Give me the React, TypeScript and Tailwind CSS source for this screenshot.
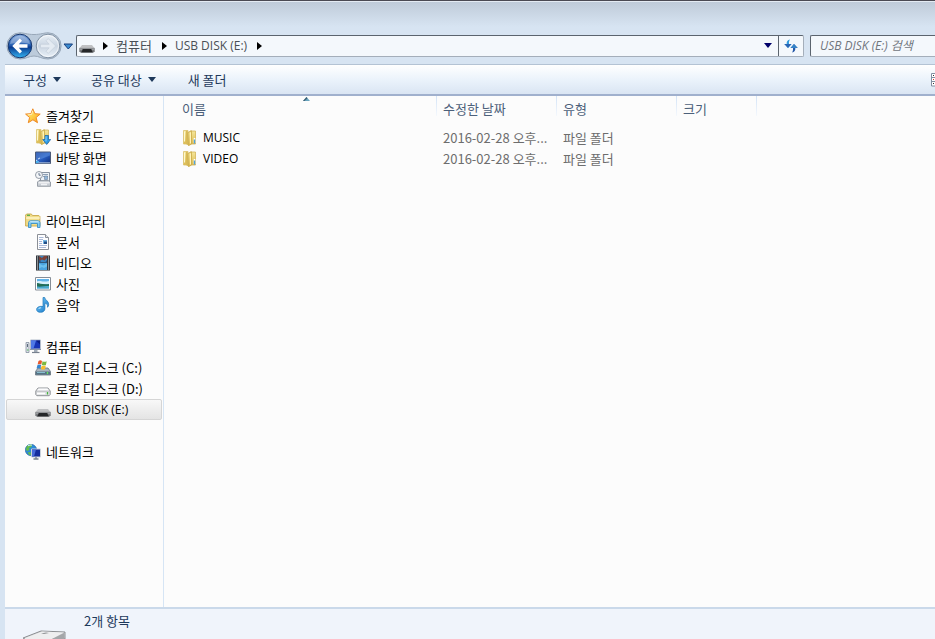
import React from 'react';

type IconProps = { className?: string };

function Star() {
  return (
    <svg width="16" height="16" viewBox="0 0 16 16">
      <defs>
        <linearGradient id="star" x1="0" y1="0" x2="1" y2="1">
          <stop offset="0" stopColor="#ffe9a0" />
          <stop offset="0.5" stopColor="#ffd04a" />
          <stop offset="1" stopColor="#f79a1e" />
        </linearGradient>
      </defs>
      <path d="M7.8.8l2 4.9 5.4.4-4.1 3.4 1.4 5.2-4.6-2.9-4.6 2.9 1.3-5.2L.6 6.1l5.3-.4z" fill="url(#star)" stroke="#ee8a24" strokeWidth="1" strokeLinejoin="round" />
      <path d="M7.8 2.6L6.6 6.4l-3.8.4" fill="none" stroke="#fff6cf" strokeWidth=".8" />
    </svg>
  );
}

function FolderShape() {
  return (
    <>
      <defs>
        <linearGradient id="leaf" x1="0" y1="0" x2="0" y2="1">
          <stop offset="0" stopColor="#f5e69a" />
          <stop offset="1" stopColor="#dcbb50" />
        </linearGradient>
      </defs>
      <path d="M1.500.5H6v13.500H1.500z" fill="url(#leaf)" stroke="#dbc26c" strokeWidth=".8" />
      <path d="M8 1h5.500v13H8z" fill="url(#leaf)" stroke="#d3b55b" strokeWidth=".8" />
      <path d="M4 .8h1.700l.8 14.700L4 14z" fill="#d9bb58" />
      <path d="M6 2.500L9.500.8v13.200L6.500 15.700z" fill="url(#leaf)" stroke="#c9a948" strokeWidth=".8" />
      <path d="M8.500 2.500v11" stroke="#fff3ba" />
      <path d="M2.500 1.500v10" stroke="#fdf8d0" />
    </>
  );
}

function Folder() {
  return (
    <svg width="16" height="16" viewBox="0 0 16 16">
      <FolderShape />
      <path d="M12.500 8v5" stroke="#fff" strokeWidth="1.600" />
      <path d="M12.500 9.500v4" stroke="#4da3dd" strokeWidth="1.300" />
    </svg>
  );
}

function Downloads() {
  return (
    <svg width="16" height="16" viewBox="0 0 16 16">
      <FolderShape />
      <path d="M10 6.500h3.500v4H15.700l-4 5-4-5H10z" fill="#2f9be6" stroke="#1663a8" strokeWidth=".7" strokeLinejoin="round" />
      <path d="M11 7.300v5" stroke="#9bdcff" strokeWidth=".9" />
    </svg>
  );
}

function Desktop() {
  return (
    <svg width="16" height="16" viewBox="0 0 16 16">
      <defs>
        <linearGradient id="desk" x1="0" y1="0" x2="1" y2="1">
          <stop offset="0" stopColor="#173c97" />
          <stop offset=".5" stopColor="#2960c4" />
          <stop offset="1" stopColor="#0e2d7c" />
        </linearGradient>
      </defs>
      <path d="M.5 2h15v11.500H.5z" fill="url(#desk)" stroke="#4a5a78" />
      <path d="M1 2.500h14v3L1 11z" fill="#7fb0ee" opacity=".35" />
      <path d="M1 12.800h14" stroke="#a8bedc" />
      <path d="M1 9.500l3 2.500H1z" fill="#bfe4ff" />
      <path d="M1 11h2.500v2H1z" fill="#49b1ef" />
      <path d="M3 9l2-1" stroke="#eef8ff" strokeWidth=".8" />
    </svg>
  );
}

function Recent() {
  return (
    <svg width="16" height="16" viewBox="0 0 16 16">
      <path d="M5.500 1.500h9v10h-9z" fill="#eef2f7" stroke="#8993a0" />
      <path d="M8 3.500h5M8 5.500h5" stroke="#8fa0b5" />
      <path d="M9.500 5h3v3.500h-3z" fill="#8fb4d8" stroke="#6d8298" strokeWidth=".6" />
      <path d="M2.500 11l1.500-1.500h9.500l2 1.500v4.300H2.500z" fill="#c9ced4" stroke="#868e98" strokeWidth=".8" />
      <path d="M3.500 11.800h11" stroke="#fff" />
      <path d="M6 13.500h6" stroke="#f1f3f5" strokeWidth="1.500" />
      <circle cx="4" cy="4" r="3.500" fill="#f4f6f9" stroke="#8a929d" strokeWidth=".9" />
      <path d="M4 2v2.200h1.800" fill="none" stroke="#4b6078" strokeWidth=".8" />
    </svg>
  );
}

function Libraries() {
  return (
    <svg width="16" height="16" viewBox="0 0 16 16">
      <path d="M.6 3.500V2l1-1h4.800l1 1.500h6.500l1 1V13H.6z" fill="#f0dc88" stroke="#c9a94c" strokeWidth=".9" />
      <path d="M2 2.300h3" stroke="#5db24f" strokeWidth="1.400" />
      <path d="M1.200 5h13.500" stroke="#fff6c9" strokeWidth="1.500" />
      <path d="M3.500 14.500V9.800q0-2 2-2H13q2 0 2 2v4.700h-2.500v-4H6v4z" fill="#83cbf0" stroke="#3b8fc7" strokeWidth=".9" />
      <path d="M4.500 9.300q.3-.6 1-.6H13q.7 0 1 .6" fill="none" stroke="#d5f1ff" strokeWidth=".9" />
    </svg>
  );
}

function Documents() {
  return (
    <svg width="16" height="16" viewBox="0 0 16 16">
      <path d="M2.500.5h8l3 3v12h-11z" fill="#fdfdfe" stroke="#8b8f96" />
      <path d="M10.500.5v3h3" fill="#dfe3e9" stroke="#8b8f96" />
      <path d="M4 3.500h4.500M4 5.500h4M4 7.500h3M4 9.500h3M4 11.500h8M4 13.500h7" stroke="#a9b9d8" />
      <path d="M8 6h4v4H8z" fill="#6fb1e2" />
      <path d="M9 7.500h3V10H9z" fill="#234e85" />
    </svg>
  );
}

function Videos() {
  return (
    <svg width="16" height="16" viewBox="0 0 16 16">
      <path d="M1 .5h14v15H1z" fill="#252a31" />
      <path d="M4 1h8v6.500H4z" fill="#3a86c4" />
      <path d="M4 8h8v7H4z" fill="#4aa3e0" />
      <path d="M4 1l3 2 2-2h3v2L9.500 5.500 7 4.500 4 6.500z" fill="#7d4238" />
      <path d="M4 8.500l4 2 4-2v3L9 13l-2-1-3 1.500z" fill="#6cc0ee" />
      <path d="M4 4.500l2.500 3H4zM12 5l-2 2.500h2z" fill="#24568d" />
      <path d="M2.500 1.500v14M13.500 1.500v14" stroke="#f2f4f6" strokeWidth="1.300" strokeDasharray="1 1" />
    </svg>
  );
}

function Pictures() {
  return (
    <svg width="16" height="16" viewBox="0 0 16 16">
      <path d="M.5 1.500h15v12.500H.5z" fill="#fff" stroke="#868e98" />
      <path d="M2 3h12v9.500H2z" fill="#62b5eb" />
      <path d="M2 5.500c3-1.500 5 1 12-.5v3H2z" fill="#d7effb" />
      <path d="M2 7c3 0 5 2 12 1v4H2z" fill="#236e58" />
      <path d="M2 10.500c4 .5 7-.5 12-.5v2.500H2z" fill="#4aa8cb" />
    </svg>
  );
}

function Music() {
  return (
    <svg width="16" height="16" viewBox="0 0 16 16">
      <defs>
        <linearGradient id="note" x1="0" y1="0" x2="1" y2="1">
          <stop offset="0" stopColor="#7ed0ff" />
          <stop offset="1" stopColor="#1173c4" />
        </linearGradient>
      </defs>
      <path d="M8 .5h1.700c.2 2.700 4.200 3.200 4 7.200-.1 1.200-.6 2-1.200 2.600.5-2.600-.8-3.700-2.600-4.200v5.800c0 2-2 3.400-4.400 3.400-2.200 0-3.900-1-3.900-2.900 0-1.800 2-3.100 4.400-3.100.7 0 1.400.1 2 .3z" fill="url(#note)" stroke="#1c76b8" strokeWidth=".7" />
      <path d="M3.500 12c.5-.9 1.500-1.200 2.600-1.200" stroke="#d5f3ff" fill="none" />
    </svg>
  );
}

function Computer() {
  return (
    <svg width="16" height="16" viewBox="0 0 16 16">
      <path d="M5.500 1h10v9h-10z" fill="#1634b5" stroke="#b3bccb" />
      <path d="M6 1.500h5L8.500 9.500H6z" fill="#4f79e6" />
      <path d="M11 1.500h4v4z" fill="#0a1d80" />
      <path d="M5 10.500h11" stroke="#8692a4" />
      <path d="M9 11h3.500v2H9z" fill="#a2acb9" />
      <path d="M7 13.500h7.500" stroke="#77818f" strokeWidth="1.200" />
      <path d="M1 3.500h3v10H1z" fill="#dce2ea" stroke="#8590a0" strokeWidth=".8" />
      <path d="M2.500 5v3" stroke="#5d6a7c" />
      <path d="M2 11h1.500" stroke="#4cba4f" />
    </svg>
  );
}

function SystemDisk() {
  return (
    <svg width="16" height="16" viewBox="0 0 16 16">
      <path d="M.5 11.500L3 8h10l2.500 3.500v3.500H.5z" fill="#a9b4bd" stroke="#5f6e7b" strokeWidth=".8" />
      <path d="M1 11.500h14v3.200H1z" fill="#557284" />
      <path d="M2 12.500h8" stroke="#87bed0" />
      <path d="M12.500 12v2" stroke="#62e35f" strokeWidth="1.300" />
      <path d="M3.500.9Q5.400-.2 7 1L6.300 4.500Q4.500 3.500 2.600 4.500z" fill="#e9582b" />
      <path d="M7.500 1.300q1.800 1 4.200 0l-.8 3.700q-2 .9-4 0z" fill="#7cb83e" />
      <path d="M2.500 5Q4.300 4 6.100 5.100L5.400 8.700Q3.500 7.500 1.500 8.500z" fill="#3585cf" />
      <path d="M6.700 5.500q1.800 1 4.100.1L10 9.300Q8 10 5.900 9.100z" fill="#f8bd2d" />
    </svg>
  );
}

function Disk() {
  return (
    <svg width="16" height="16" viewBox="0 0 16 16">
      <path d="M.8 10L3 7h10l2.200 3v3.500l-1 1.200H1.800l-1-1.200z" fill="#dfe1e4" stroke="#85888c" strokeWidth=".9" />
      <path d="M2 9.500h12L12.500 7.500h-9z" fill="#fcfcfd" />
      <path d="M1.500 10.200h13" stroke="#a3a6aa" strokeWidth=".6" />
      <path d="M2 12.500h8" stroke="#fff" strokeWidth="1.500" />
      <path d="M12.500 11v2.500" stroke="#46b43e" strokeWidth="1.300" />
    </svg>
  );
}

function UsbDisk({ className }: IconProps) {
  return (
    <svg width="16" height="16" viewBox="0 0 16 16" className={className}>
      <path d="M.3 10.500L3 7h10l2.700 3.500z" fill="#c0c1c3" />
      <path d="M.3 10.300h15.400v3l-1 1.200H1.300l-1-1.200z" fill="#77797c" />
      <path d="M.3 10.300h15.400" stroke="#929497" strokeWidth=".8" />
      <path d="M4 11h8l2 3.500H2z" fill="#242628" />
      <path d="M1 11.500h2M13 11.500h2" stroke="#9b9da0" />
    </svg>
  );
}

function Network() {
  return (
    <svg width="16" height="16" viewBox="0 0 16 16">
      <circle cx="6" cy="6" r="5.700" fill="#2c8bd7" stroke="#1d5d9f" strokeWidth=".6" />
      <path d="M2 2q3-2.500 5-1.300L6.500 3 4 4l.5 2L2 7 .8 5.500zM2.500 8.500l3-.5L6 11l-1.500.3z" fill="#64bd4b" />
      <path d="M3 1.800q2-1.200 4-.7" stroke="#d0f1ff" fill="none" />
      <path d="M6.500 5h9v8h-9z" fill="#142d9e" stroke="#c8d1dc" />
      <path d="M7 5.500h4l-2 7H7z" fill="#4569d9" />
      <path d="M11 13v1.500M8.500 15h5" stroke="#76808e" strokeWidth="1.300" />
    </svg>
  );
}

const groups = [
  {
    label: '즐겨찾기',
    icon: Star,
    items: [
      { label: '다운로드', icon: Downloads },
      { label: '바탕 화면', icon: Desktop },
      { label: '최근 위치', icon: Recent },
    ],
  },
  {
    label: '라이브러리',
    icon: Libraries,
    items: [
      { label: '문서', icon: Documents },
      { label: '비디오', icon: Videos },
      { label: '사진', icon: Pictures },
      { label: '음악', icon: Music },
    ],
  },
  {
    label: '컴퓨터',
    icon: Computer,
    items: [
      { label: '로컬 디스크 (C:)', icon: SystemDisk },
      { label: '로컬 디스크 (D:)', icon: Disk },
      { label: 'USB DISK (E:)', icon: UsbDisk, selected: true },
    ],
  },
  { label: '네트워크', icon: Network, items: [] },
];

const columns = [
  { label: '이름', width: 'w-[261px]', sorted: true },
  { label: '수정한 날짜', width: 'w-[120px]' },
  { label: '유형', width: 'w-[120px]' },
  { label: '크기', width: 'w-20' },
];

const files = [
  { name: 'MUSIC', date: '2016-02-28 오후...', type: '파일 폴더' },
  { name: 'VIDEO', date: '2016-02-28 오후...', type: '파일 폴더' },
];

// latin-only labels are set a size smaller than the hangul ones
const latin = "font-['Open_Sans',sans-serif] text-xs leading-5";

function RightArrow() {
  return (
    <svg width="5" height="8" viewBox="0 0 5 8" className="shrink-0">
      <path d="M0 0l5 4-5 4z" fill="#000" />
    </svg>
  );
}

function DownArrow({ className }: IconProps) {
  return (
    <svg width="8" height="5" viewBox="0 0 8 5" className={className}>
      <path d="M0 0h8L4 5z" fill="currentColor" />
    </svg>
  );
}

function NavButtons() {
  return (
    <div className="relative flex h-7 w-[70px] shrink-0 items-center">
      <svg width="70" height="28" viewBox="0 0 70 28" className="absolute inset-0">
        <defs>
          <linearGradient id="back" x1="0" y1="0" x2="0" y2="1">
            <stop offset="0" stopColor="#84a9dc" />
            <stop offset=".45" stopColor="#2a62b4" />
            <stop offset=".55" stopColor="#0a3b90" />
            <stop offset="1" stopColor="#35b4f2" />
          </linearGradient>
          <linearGradient id="fwd" x1="0" y1="0" x2="0" y2="1">
            <stop offset="0" stopColor="#e9f0f7" />
            <stop offset=".5" stopColor="#cbd6e2" />
            <stop offset="1" stopColor="#e8f0f8" />
          </linearGradient>
        </defs>
        <path d="M14 .8c4 0 7 1.700 14 1.700S38 .8 42 .8a13 13 0 010 26.200c-6 0-9-3-14-3s-8 3-14 3A13 13 0 0114 .8z" fill="#bccbdb" stroke="#98a7b8" />
        <circle cx="14" cy="14" r="11.800" fill="url(#back)" stroke="#19396f" />
        <path d="M4 12a10.200 10.200 0 0120 0q-10-3-20 0z" fill="#fff" opacity=".3" />
        <path d="M13.800 6.500L6.300 14l7.500 7.500 2.200-2.300-3.200-3.400H21.500v-3.600H12.800L16 8.800z" fill="#fff" />
        <circle cx="42" cy="14" r="11.800" fill="url(#fwd)" stroke="#8191a3" />
        <circle cx="42" cy="14" r="10.500" fill="none" stroke="#fff" opacity=".6" />
        <path d="M42.200 6.500l7.500 7.500-7.500 7.500-2.200-2.300 3.200-3.400H34.500v-3.600h8.700L40 8.800z" fill="#e4ebf2" stroke="#c6d0dc" strokeWidth=".8" />
        <path d="M58 12h8.500l-4.200 5z" fill="#3b8bd0" stroke="#173f7d" />
      </svg>
      <button aria-label="뒤로" className="relative h-7 w-7 rounded-full" />
      <button aria-label="앞으로" className="relative h-7 w-7 rounded-full" />
      <button aria-label="최근 페이지" className="relative h-7 w-3.5" />
    </div>
  );
}

function AddressBar() {
  return (
    <div className="flex h-[37px] items-center pl-1.5">
      <NavButtons />
      <div className="flex h-[22px] min-w-0 flex-1 items-center rounded-xs border border-[#a4aeba] border-t-[#5b646e] border-l-[#5b646e] bg-[#f4f8fc] text-[#4a4f56]">
        <UsbDisk className="ml-0.5 mr-2 shrink-0" />
        <RightArrow />
        <button className="ml-2 mr-2.5 whitespace-nowrap">컴퓨터</button>
        <RightArrow />
        <button className={`ml-2 mr-2.5 whitespace-nowrap ${latin}`}>USB DISK (E:)</button>
        <RightArrow />
        <button aria-label="이전 위치" className="ml-auto grid h-full w-5 place-items-center text-[#00006a]">
          <DownArrow />
        </button>
        <button aria-label="새로 고침" className="grid h-full w-[25px] place-items-center border-l border-[#5b646e]">
          <svg width="14" height="14" viewBox="0 0 14 14">
            <path d="M6 .5C3.500.8 2.500 2.500 2.700 5H.3L4 9l3.500-4H5C4.800 3.200 5 2 6 .5z" fill="#2f9bdd" />
            <path d="M.3 5h7.200L4 9z" fill="#2a64b4" />
            <path d="M8 13.500c2.500-.3 3.500-2 3.300-4.500h2.400L10 5 6.500 9H9c.2 1.800 0 3-1 4.500z" fill="#2558a8" />
            <path d="M6.500 9h7.200L10 5z" fill="#3583c8" />
          </svg>
        </button>
      </div>
      <input
        type="text"
        aria-label="검색"
        placeholder="USB DISK (E:) 검색"
        className="ml-1.5 h-[22px] w-[125px] shrink-0 rounded-l-xs border border-r-0 border-[#a4aeba] border-t-[#5b646e] border-l-[#5b646e] bg-[#f4f8fc] pl-[9px] font-['Open_Sans','Noto_Sans_CJK_KR',sans-serif] text-xs italic outline-none placeholder:text-[#70757c]"
      />
    </div>
  );
}

function Toolbar() {
  return (
    <div className="flex h-8 items-center border-t border-b-2 border-t-[#b4c3d4] border-b-[#a0b0cd] bg-linear-to-b from-white via-[#ebf3fb] via-50% to-[#dae5f3] pl-[18px] text-[#1e395b]">
      <button className="flex items-center gap-1.5">
        구성 <DownArrow />
      </button>
      <button className="ml-[30px] flex items-center gap-1.5">
        공유 대상 <DownArrow />
      </button>
      <button className="ml-8">새 폴더</button>
      <button aria-label="보기 변경" className="ml-auto">
        <svg width="4" height="14" viewBox="0 0 4 14">
          <path d="M4 .5H.5v12.500H4" fill="#fff" stroke="#8290a2" />
          <path d="M1 4.500h3M1 8.500h3" stroke="#8290a2" />
          <path d="M2 2.500h1M2 10.500h1" stroke="#333" />
          <path d="M2 6.500h1" stroke="#d33" />
        </svg>
      </button>
    </div>
  );
}

function Sidebar() {
  return (
    <nav className="flex w-[159px] shrink-0 flex-col gap-[21px] border-r border-[#d6e5f5] px-px pt-[9px]">
      {groups.map(group => (
        <div key={group.label}>
          <a href="#" className="flex h-[21px] items-center gap-[5px] pl-[19px]">
            <group.icon />
            {group.label}
          </a>
          {group.items.map(item => (
            <a
              key={item.label}
              href="#"
              className={
                'selected' in item
                  ? `flex h-[21px] items-center gap-[5px] rounded-xs border border-[#d5d5d5] bg-linear-to-b from-[#f8f8f8] to-[#e4e4e4] pl-7 ${latin}`
                  : 'flex h-[21px] items-center gap-[5px] pl-[29px]'
              }
            >
              <item.icon />
              {item.label}
            </a>
          ))}
        </div>
      ))}
    </nav>
  );
}

function FileList() {
  return (
    <main className="min-w-0 flex-1 overflow-hidden pl-3">
      <table className="w-[581px] table-fixed border-collapse text-left">
        <thead>
          <tr className="h-[31px] text-[#4c607a]">
            {columns.map(col => (
              <th key={col.label} className={`${col.width} relative p-0 align-top font-normal`}>
                <div className="flex h-5">
                  <span className="flex-1 pt-1 pl-1.5 leading-[18px]">{col.label}</span>
                  <span className="w-px bg-linear-to-b from-[#d3e3f6] to-[#f4f8fd]" />
                </div>
                {col.sorted && (
                  <svg width="7" height="4" viewBox="0 0 7 4" className="absolute top-px left-[127px]">
                    <path d="M0 4l3.500-4L7 4z" fill="#69a5bf" />
                    <path d="M0 4l3.500-4 1 1.200L1.500 4z" fill="#3c5e72" />
                  </svg>
                )}
              </th>
            ))}
          </tr>
        </thead>
        <tbody>
          {files.map(file => (
            <tr key={file.name} className="h-[21px] text-[#6d6d6d]">
              <td className="p-0 pl-1.5 text-black">
                <div className={`flex items-center gap-[5px] ${latin}`}>
                  <Folder />
                  {file.name}
                </div>
              </td>
              <td className="p-0 pl-1.5 whitespace-nowrap">{file.date}</td>
              <td className="p-0 pl-1.5 whitespace-nowrap">{file.type}</td>
              <td className="p-0" />
            </tr>
          ))}
        </tbody>
      </table>
    </main>
  );
}

function DetailsPane() {
  return (
    <footer className="flex h-8 shrink-0 gap-[18px] overflow-hidden border-t-2 border-[#cad9ea] bg-[#f0f4fb] pl-[18px] text-[#1e395b]">
      <svg width="43" height="30" viewBox="0 0 43 30" className="shrink-0">
        <path d="M0 29L18 22l24 1v7H0z" fill="#c9cbcd" stroke="#8c8f92" />
        <path d="M2 29l17-6.500 22 1L29 30H2z" fill="#eeeeef" />
        <path d="M29 30l12-6v6z" fill="#a4a6a9" />
        <path d="M18 24.500l5-1 3 .6-5 1z" fill="#909396" />
      </svg>
      <span className="pt-0.5 leading-5">2개 항목</span>
    </footer>
  );
}

export default function App() {
  return (
    <div className="flex h-screen flex-col overflow-hidden border-t border-[#4b4a53] bg-[#d7e4f2] font-['Noto_Sans_CJK_KR',sans-serif] text-[13px] leading-5 text-black">
      <header className="shrink-0 border-t border-[#e4ebf3] bg-linear-to-b from-[#bfcbd9] to-[#d7e4f2] to-40% pt-[25px]">
        <AddressBar />
      </header>
      <div className="flex min-h-0 flex-1 flex-col pl-[5px]">
        <Toolbar />
        <div className="flex min-h-0 flex-1 bg-[#fcfcfc]">
          <Sidebar />
          <FileList />
        </div>
        <DetailsPane />
      </div>
    </div>
  );
}
